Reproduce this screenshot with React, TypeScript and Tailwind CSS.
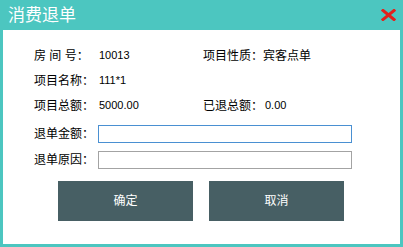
export default function App() {
  const font = { fontFamily: '"Liberation Sans", "Noto Sans CJK SC", sans-serif' };
  const num = "text-[11px]";
  return (
    <div
      className="w-[403px] h-[247px] bg-[#4cc6c0] flex flex-col text-[12px] text-black"
      style={font}
    >
      <div className="h-[30px] flex items-center justify-between pl-[8px] pr-[7px]">
        <span className="text-white text-[17px] leading-none">消费退单</span>
        <svg width="15" height="12" viewBox="0 0 15 12" className="mt-[-1px]">
          <path d="M2 1.5 L13 10.5 M13 1.5 L2 10.5" stroke="#e3201b" strokeWidth="3" strokeLinecap="square" />
        </svg>
      </div>
      <div className="flex-1 bg-white mx-[3px] mb-[3px] pt-[13px] pl-[31px]">
        <div className="h-[25px] flex items-center">
          <span className="w-[65px]">房 间 号：</span>
          <span className={`w-[104px] ${num}`}>10013</span>
          <span className="w-[60px]">项目性质：</span>
          <span>宾客点单</span>
        </div>
        <div className="h-[25px] flex items-center">
          <span className="w-[65px]">项目名称：</span>
          <span className={num}>111*1</span>
        </div>
        <div className="h-[25px] flex items-center">
          <span className="w-[65px]">项目总额：</span>
          <span className={`w-[104px] ${num}`}>5000.00</span>
          <span className="w-[62px]">已退总额：</span>
          <span className={num}>0.00</span>
        </div>
        <div className="mt-[7px] h-[18px] flex items-center">
          <span className="w-[64px]">退单金额：</span>
          <input className="w-[254px] h-[18px] border border-[#4a90d2] outline-none" />
        </div>
        <div className="mt-[8px] h-[18px] flex items-center">
          <span className="w-[64px]">退单原因：</span>
          <input className="w-[254px] h-[18px] border border-[#a3a3a3] outline-none" />
        </div>
        <div className="mt-[12px] flex gap-[16px] pl-[24px]">
          <button className="w-[135px] h-[40px] bg-[#475f64] text-white text-[12px]">确定</button>
          <button className="w-[135px] h-[40px] bg-[#475f64] text-white text-[12px]">取消</button>
        </div>
      </div>
    </div>
  );
}
